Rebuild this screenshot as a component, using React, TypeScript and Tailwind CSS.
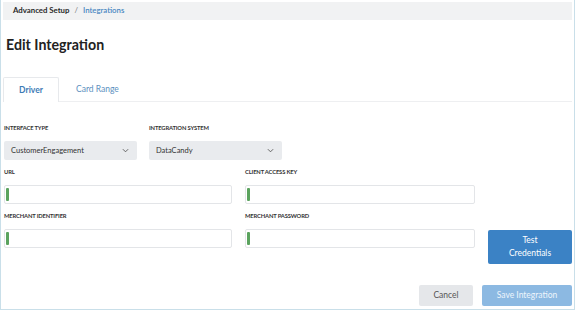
import React from 'react';

const font = { fontFamily: 'Lato, "Open Sans", sans-serif' };

function Label({ children }: { children: React.ReactNode }) {
  return (
    <div className="h-[25px] flex items-center text-[5.8px] font-bold uppercase text-[#333] tracking-tight">
      {children}
    </div>
  );
}

function Select({ value }: { value: string }) {
  return (
    <div className="w-[133px] h-[19px] bg-[#e9ebee] rounded-[2px] flex items-center justify-between pl-[7px] pr-[8px] text-[7.5px] text-[#333]">
      <span>{value}</span>
      <svg width="7" height="5" viewBox="0 0 8 5" fill="none" stroke="#555" strokeWidth="1">
        <path d="M1 1l3 3 3-3" />
      </svg>
    </div>
  );
}

function Input() {
  return (
    <div className="h-[19px] border border-[#e3e5e8] rounded-[2px] bg-white flex items-center">
      <div className="w-[3px] h-[13px] bg-[#5ba35e] rounded-[1px] ml-[1px]" />
    </div>
  );
}

export default function App() {
  return (
    <div className="w-[575px] h-[311px] bg-white" style={font}>
      <div className="h-[310px] border-x border-b border-[#c9dfe9] pt-[2px] px-[2px] flex flex-col">
        {/* breadcrumb */}
        <div className="h-[18px] bg-[#f1f2f3] flex items-center pl-[10px] text-[7.8px]">
          <span className="font-bold text-[#2a2a2a]">Advanced Setup</span>
          <span className="mx-[5px] text-[#777]">/</span>
          <span className="font-semibold text-[#4a88c2]">Integrations</span>
        </div>

        <h1 className="text-[14.2px] font-bold text-[#222] ml-[3px] mt-[15px] leading-[20px]">Edit Integration</h1>

        {/* tabs */}
        <div className="mt-[22px] flex border-b border-[#eeeff1] h-[25px]">
          <div className="w-[56px] border border-b-0 border-[#e7e9ec] rounded-t-[2px] flex items-center justify-center text-[8.5px] font-bold text-[#3d7bb5] bg-white -mb-px">
            Driver
          </div>
          <div className="ml-[17px] flex items-center text-[8.5px] text-[#5c8fc0]">Card Range</div>
        </div>

        {/* selects */}
        <div className="mt-[14px] flex gap-[12px] pl-[1px]">
          <div>
            <Label>Interface Type</Label>
            <Select value="CustomerEngagement" />
          </div>
          <div>
            <Label>Integration System</Label>
            <Select value="DataCandy" />
          </div>
        </div>

        {/* inputs */}
        <div className="flex gap-[13px] pl-[1px]">
          <div className="flex-1 flex flex-col max-w-[229px]">
            <div>
              <Label>URL</Label>
              <Input />
            </div>
            <div>
              <Label>Merchant Identifier</Label>
              <Input />
            </div>
          </div>
          <div className="w-[230px] flex flex-col">
            <div>
              <Label>Client Access Key</Label>
              <Input />
            </div>
            <div>
              <Label>Merchant Password</Label>
              <Input />
            </div>
          </div>
          <div className="flex flex-col justify-end">
            <button className="w-[84px] h-[34px] bg-[#3b82c5] rounded-[2px] text-white text-[8.5px] leading-[13px] -mb-[16px]">
              Test
              <br />
              Credentials
            </button>
          </div>
        </div>

        {/* footer */}
        <div className="mt-auto mb-[3px] flex justify-end gap-[9px]">
          <button className="w-[54px] h-[21px] bg-[#e5e7ea] rounded-[2px] text-[8.5px] text-[#555]">Cancel</button>
          <button className="w-[90px] h-[21px] bg-[#8cb9e2] rounded-[2px] text-[8.5px] text-[#eef5fc]">Save Integration</button>
        </div>
      </div>
    </div>
  );
}
